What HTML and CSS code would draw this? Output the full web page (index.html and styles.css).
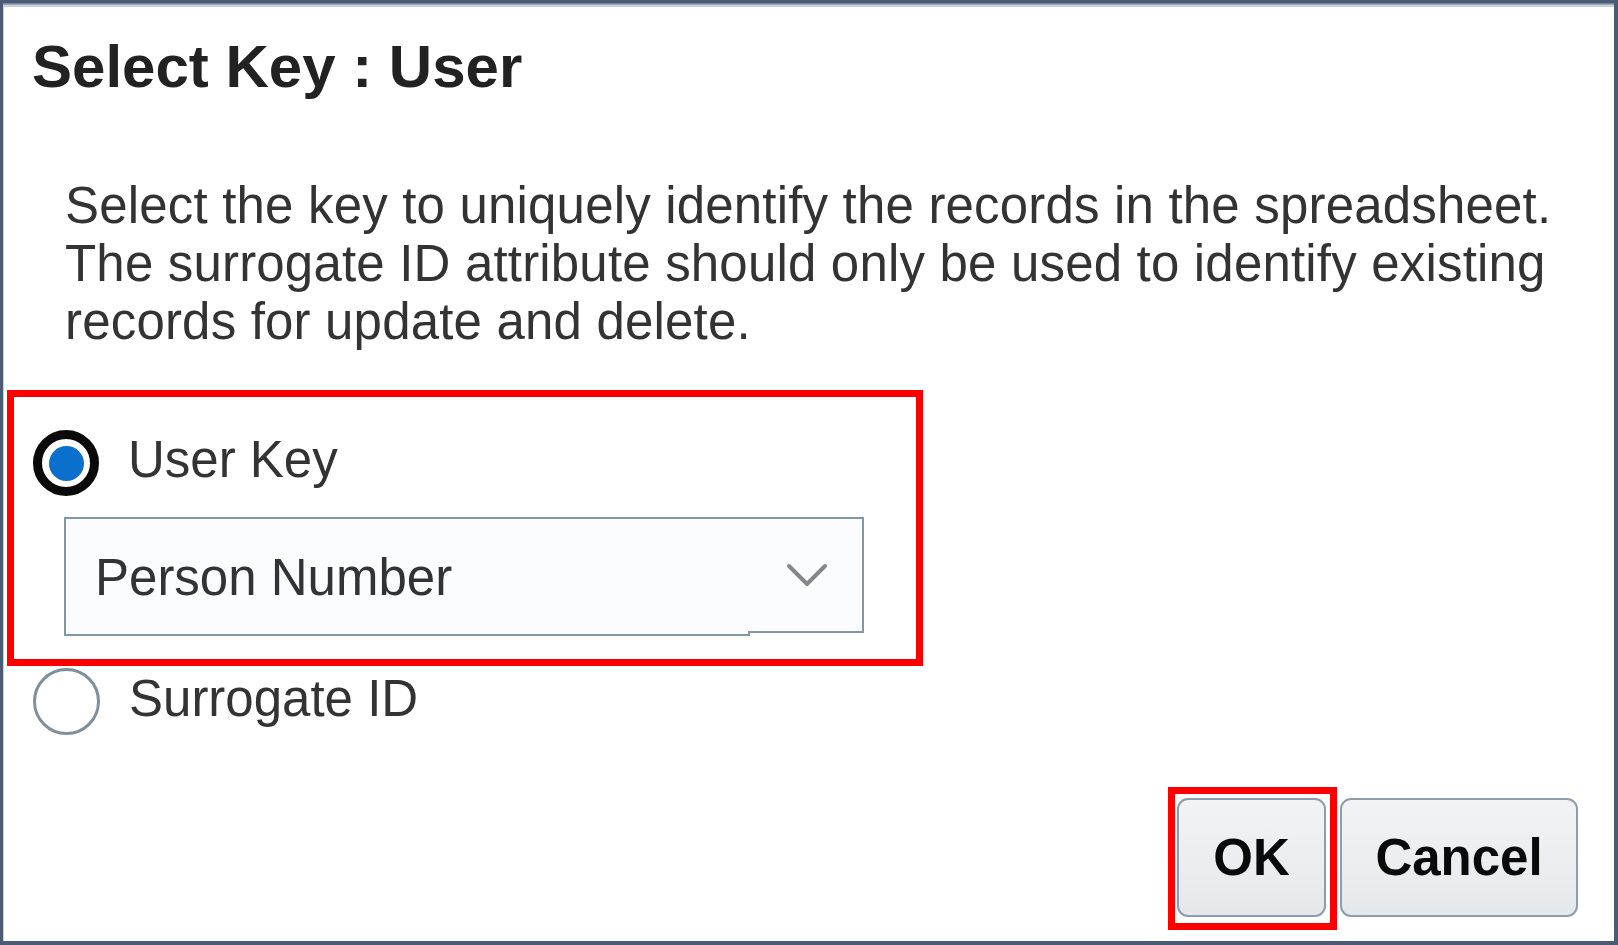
FILE: index.html
```html
<!DOCTYPE html>
<html lang="en">
<head>
  <meta charset="UTF-8">
  <title>Select Key : User</title>
  <link rel="stylesheet" href="styles.css">
</head>
<body>
  <div class="dialog">
    <h1 class="title">Select Key : User</h1>

    <p class="desc">
      Select the key to uniquely identify the records in the spreadsheet.<br>
      The surrogate ID attribute should only be used to identify existing<br>
      records for update and delete.
    </p>

    <div class="key-box">
      <label class="option">
        <span class="radio checked"><span class="dot"></span></span>
        <span class="option-text">User Key</span>
      </label>
      <div class="select">
        <span class="select-value">Person Number</span>
        <svg class="chevron" width="42" height="24" viewBox="0 0 42 24">
          <polyline points="3,3 21,21 39,3" fill="none" stroke="#878787" stroke-width="4" stroke-linecap="round" stroke-linejoin="round"/>
        </svg>
      </div>
    </div>

    <label class="option option-second">
      <span class="radio"></span>
      <span class="option-text">Surrogate ID</span>
    </label>

    <div class="buttons">
      <span class="ok-box"><button class="btn">OK</button></span>
      <button class="btn btn-cancel">Cancel</button>
    </div>
  </div>
</body>
</html>
```

FILE: styles.css
```css
body {
  margin: 0;
  background: #ffffff;
  font-family: "Liberation Sans", Arial, sans-serif;
}
.dialog {
  width: 1618px;
  height: 945px;
  box-sizing: border-box;
  border-style: solid;
  border-color: #4b5b73;
  border-width: 3px 4px 4px 3px;
  box-shadow: inset 0 1px 0 #72849d, inset 0 2px 0 #9aa9bd, inset 0 4px 0 #c8d1dc, inset 1px 0 0 #c9d2dc;
  display: flex;
  flex-direction: column;
  align-items: flex-start;
}
.title {
  margin: 34px 0 0 29px;
  font-size: 60px;
  line-height: 60px;
  font-weight: bold;
  color: #222222;
}
.desc {
  margin: 80px 0 0 62px;
  font-size: 51px;
  line-height: 58px;
  letter-spacing: 0.18px;
  color: #333333;
}
.key-box {
  margin: 39px 0 0 4px;
  width: 916px;
  height: 276px;
  box-sizing: border-box;
  border: 7px solid #ff0000;
}
.option {
  display: flex;
  align-items: flex-start;
  gap: 29px;
  margin: 33px 0 0 19px;
}
.option-text {
  margin-top: 1px;
  font-size: 51px;
  line-height: 57px;
  color: #333333;
}
.radio {
  width: 67px;
  height: 67px;
  box-sizing: border-box;
  border-radius: 50%;
  border: 3px solid #7f909c;
  background: #ffffff;
  display: flex;
  align-items: center;
  justify-content: center;
  flex-shrink: 0;
}
.radio.checked {
  width: 66px;
  height: 66px;
  border: 9px solid #0a0a0a;
}
.dot {
  width: 35px;
  height: 35px;
  border-radius: 50%;
  background: #0b6fce;
}
.select {
  position: relative;
  margin: 21px 0 0 50px;
  width: 800px;
  height: 116px;
  box-sizing: border-box;
  border: 2px solid #8597a4;
  background: #fbfcfe;
  display: flex;
  align-items: center;
  padding: 4px 0 0 29px;
}
.select::after {
  content: "";
  position: absolute;
  top: 100%;
  left: -2px;
  width: 682px;
  height: 3px;
  background: #fbfcfe;
  border: 2px solid #8597a4;
  border-top: none;
}
.select-value {
  font-size: 51px;
  line-height: 57px;
  color: #333333;
}
.chevron {
  margin-left: auto;
  margin-right: 34px;
  margin-top: -4px;
}
.option-second {
  margin: 2px 0 0 30px;
}
.option-second .option-text {
  margin-top: 2px;
}
.buttons {
  align-self: flex-end;
  margin: 52px 36px 0 0;
  display: flex;
  align-items: flex-start;
}
.ok-box {
  display: block;
  border: 7px solid #ff0000;
  padding: 4px 4px 6px 2px;
}
.btn {
  display: block;
  height: 119px;
  width: 149px;
  box-sizing: border-box;
  border: 2px solid #8e9dab;
  border-radius: 11px;
  background: linear-gradient(#f2f3f5, #e5e8eb);
  font-family: "Liberation Sans", Arial, sans-serif;
  font-size: 51px;
  font-weight: bold;
  color: #0a0a0a;
  padding: 0;
}
.btn-cancel {
  width: 238px;
  margin: 11px 0 0 3px;
}
```
